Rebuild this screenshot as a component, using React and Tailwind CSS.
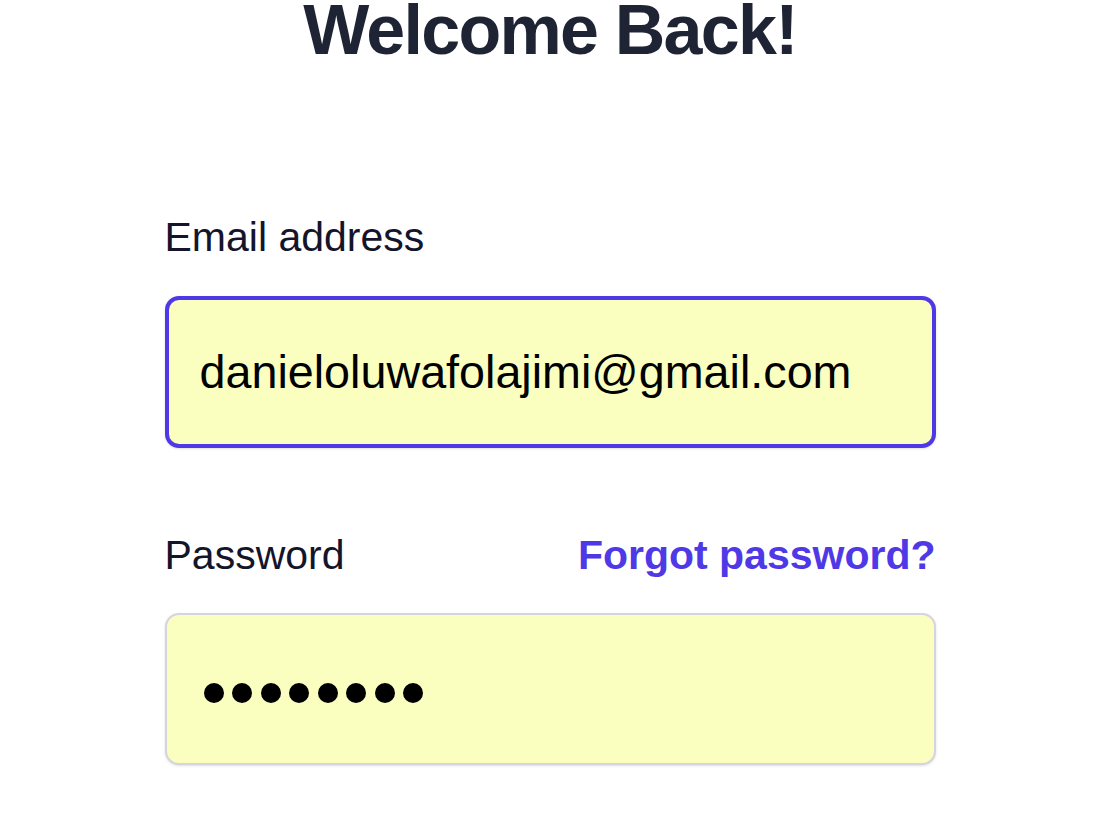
export default function App() {
  const dots = [0, 1, 2, 3, 4, 5, 6, 7]

  return (
    <main
      className="min-h-screen bg-white"
      style={{ fontFamily: '"Liberation Sans", Arial, sans-serif' }}
    >
      <div className="mx-auto w-[771px]">
        <h1 className="text-center text-[70px] font-bold leading-[60px] tracking-tight text-[#1e2433]">
          Welcome Back!
        </h1>

        <form className="mt-[157px]" onSubmit={(e) => e.preventDefault()}>
          <label className="block text-[41px] leading-[41px] text-[#14142b]" htmlFor="email">
            Email address
          </label>
          <div className="mt-[38px] flex h-[152px] items-center rounded-[14px] border-4 border-[#4f39e6] bg-[#fafebf] pl-[31px] shadow-sm">
            <span id="email" className="text-[46.7px] leading-none text-black">
              danieloluwafolajimi@gmail.com
            </span>
          </div>

          <div className="mt-[87px] flex items-center justify-between">
            <label className="text-[41px] leading-[41px] text-[#14142b]" htmlFor="password">
              Password
            </label>
            <a className="text-[41px] font-bold leading-[41px] text-[#4f39e6]" href="#">
              Forgot password?
            </a>
          </div>
          <div
            id="password"
            className="mt-[37px] flex h-[152px] items-center gap-[8.5px] rounded-[14px] border-2 border-[#d6d4df] bg-[#fafebf] pl-[37px] pt-2 shadow-sm"
          >
            {dots.map((d) => (
              <span key={d} className="h-5 w-5 rounded-full bg-black" />
            ))}
          </div>
        </form>
      </div>
    </main>
  )
}
